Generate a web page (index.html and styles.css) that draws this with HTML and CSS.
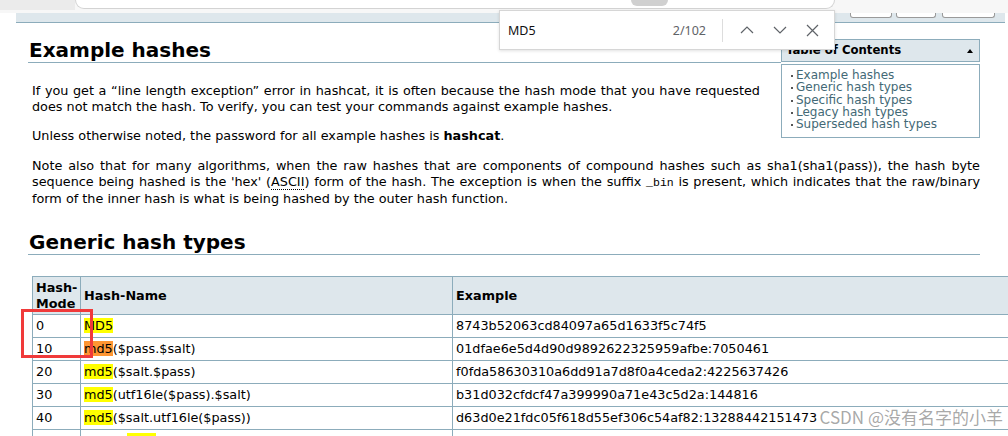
FILE: index.html
```html
<!DOCTYPE html>
<html>
<head>
<meta charset="utf-8">
<title>example_hashes [hashcat wiki]</title>
<link rel="stylesheet" href="styles.css">
</head>
<body>
<div class="chrome">
  <div class="tabarea"></div>
  <div class="addressbar"><span class="pill"></span></div>
</div>
<div class="wikibar">
  <span class="wbtn wb1"></span>
  <span class="wbtn wb2"></span>
  <span class="wbtn wb3"></span>
</div>
<div class="page">
  <div class="toc">
    <div class="toc-head"><span class="toc-title">Table of Contents</span><span class="toc-tri"></span></div>
    <ul class="toc-list">
      <li><a class="toc-link">Example hashes</a></li>
      <li><a class="toc-link">Generic hash types</a></li>
      <li><a class="toc-link">Specific hash types</a></li>
      <li><a class="toc-link">Legacy hash types</a></li>
      <li><a class="toc-link">Superseded hash types</a></li>
    </ul>
  </div>
  <h1 class="sec-title first">Example hashes</h1>
  <div class="level">
    <p><span class="ln">If you get a “line length exception” error in hashcat, it is often because the hash mode that you have requested</span> does not match the hash. To verify, you can test your commands against example hashes.</p>
    <p>Unless otherwise noted, the password for all example hashes is <strong>hashcat</strong>.</p>
    <p class="last"><span class="ln">Note also that for many algorithms, when the raw hashes that are components of compound hashes such as sha1(sha1(pass)), the hash byte</span><span class="ln">sequence being hashed is the 'hex' (<abbr title="American Standard Code for Information Interchange">ASCII</abbr>) form of the hash. The exception is when the suffix <code>_bin</code> is present, which indicates that the raw/binary</span> form of the inner hash is what is being hashed by the outer hash function.</p>
  </div>
  <h2 class="sec-title second">Generic hash types</h2>
  <div class="level">
    <table class="hashes">
      <colgroup><col class="c1"><col class="c2"><col class="c3"></colgroup>
      <thead>
        <tr><th>Hash-Mode</th><th>Hash-Name</th><th>Example</th></tr>
      </thead>
      <tbody>
        <tr><td>0</td><td><mark class="hl">MD5</mark></td><td>8743b52063cd84097a65d1633f5c74f5</td></tr>
        <tr><td>10</td><td><mark class="hl cur">md5</mark>($pass.$salt)</td><td>01dfae6e5d4d90d9892622325959afbe:7050461</td></tr>
        <tr><td>20</td><td><mark class="hl">md5</mark>($salt.$pass)</td><td>f0fda58630310a6dd91a7d8f0a4ceda2:4225637426</td></tr>
        <tr><td>30</td><td><mark class="hl">md5</mark>(utf16le($pass).$salt)</td><td>b31d032cfdcf47a399990a71e43c5d2a:144816</td></tr>
        <tr><td>40</td><td><mark class="hl">md5</mark>($salt.utf16le($pass))</td><td>d63d0e21fdc05f618d55ef306c54af82:13288442151473</td></tr>
        <tr><td>50</td><td>HMAC-<mark class="hl">MD5</mark> (key = $pass)</td><td>fc741db0a2968c39d9c2a5cc75b05370:1234</td></tr>
      </tbody>
    </table>
  </div>
</div>

<div class="findbar">
  <span class="fb-query">MD5</span>
  <span class="fb-count">2/102</span>
  <span class="fb-sep"></span>
  <span class="fb-btn"><svg width="14" height="8" viewBox="0 0 14 8"><polyline points="1,7 7,1 13,7" fill="none" stroke="#5f6368" stroke-width="1.2"/></svg></span>
  <span class="fb-btn"><svg width="14" height="8" viewBox="0 0 14 8"><polyline points="1,1 7,7 13,1" fill="none" stroke="#5f6368" stroke-width="1.2"/></svg></span>
  <span class="fb-btn"><svg width="13" height="13" viewBox="0 0 13 13"><path d="M1 1 L12 12 M12 1 L1 12" fill="none" stroke="#5f6368" stroke-width="1.2"/></svg></span>
</div>
<div class="annot"></div>
<div class="watermark">CSDN @没有名字的小羊</div>
</body>
</html>
```
FILE: styles.css
```css
html, body {
  margin: 0;
  padding: 0;
  overflow: hidden;
  background: #fff;
}
body {
  width: 1008px;
  height: 436px;
  position: relative;
  font-family: "DejaVu Sans", Verdana, sans-serif;
  font-size: 12.8px;
  color: #000;
}

/* browser chrome strip */
.chrome {
  height: 13px;
  background: #f7f7f7;
  display: flex;
  align-items: flex-start;
}
.tabarea {
  width: 75px;
  height: 10px;
  background: #ebebeb;
}
.addressbar {
  position: relative;
  width: 760px;
  height: 9px;
  box-sizing: border-box;
  background: #fff;
  border: 1px solid #d3d3d3;
  border-top: none;
  border-radius: 0 0 14px 14px;
}
.pill {
  position: absolute;
  left: 555px;
  top: 0;
  width: 37px;
  height: 6px;
  background: #d0d0d0;
  border-radius: 0 0 12px 12px;
}

/* dokuwiki top bar */
.wikibar {
  margin-left: 16px;
  width: 979px;
  height: 9px;
  background: #dee7ec;
  border-bottom: 1px solid #8cacbb;
  display: flex;
  justify-content: flex-end;
  align-items: flex-start;
  padding-right: 10px;
}
.wbtn {
  height: 4px;
  background: #fff;
  border: 1px solid #9a9a9a;
  border-top: none;
  border-radius: 0 0 3px 3px;
}
.wb1 { width: 40px; margin-right: 4px; }
.wb2 { width: 38px; margin-right: 6px; }
.wb3 { width: 51px; }

/* page */
.page {
  padding: 15px 28px 0 28px;
  width: 952px;
}
.sec-title {
  margin: 0;
  padding-left: 1px;
  font-size: 20px;
  font-weight: bold;
  border-bottom: 1px solid #8cacbb;
}
.sec-title.first {
  line-height: 24px;
  margin-bottom: 20px;
}
.sec-title.second {
  line-height: 23px;
  margin-top: 25px;
}
.level {
  margin-left: 4px;
}
.level p {
  margin: 0 0 14px 0;
  line-height: 15.7px;
  text-align: justify;
}
.level p.last {
  margin-bottom: 0;
}
.ln {
  display: block;
  text-align: justify;
  text-align-last: justify;
}
abbr {
  text-decoration: none;
  border-bottom: 1px dotted #000;
}
code {
  font-family: "Liberation Mono", "DejaVu Sans Mono", monospace;
  font-size: 11.5px;
}

/* TOC */
.toc {
  float: right;
  width: 199px;
  margin: 1px 0 0 21px;
  background: #fff;
  position: relative;
  z-index: 1;
}
.toc-head {
  height: 21px;
  line-height: 21px;
  background: #dee7ec;
  border: 1px solid #8cacbb;
  padding: 0 6px 0 4px;
  display: flex;
  justify-content: space-between;
  align-items: center;
  font-weight: bold;
  font-size: 11.7px;
}
.toc-tri {
  width: 0;
  height: 0;
  border-left: 3.5px solid transparent;
  border-right: 3.5px solid transparent;
  border-bottom: 4px solid #000;
}
.toc-list {
  list-style: none;
  margin: 2px 0 0 0;
  padding: 4px 0 7px 0;
  border: 1px solid #8cacbb;
  font-size: 12px;
  line-height: 12.3px;
}
.toc-list li {
  position: relative;
  padding-left: 14px;
}
.toc-list li::before {
  content: "";
  position: absolute;
  left: 9px;
  top: 6px;
  width: 2px;
  height: 2px;
  background: #555;
}
.toc-link {
  color: #436976;
  text-decoration: none;
}

/* table */
.hashes {
  margin-top: 21px;
  border-collapse: collapse;
  table-layout: fixed;
  width: 1180px;
}
.c1 { width: 48px; }
.c2 { width: 372px; }
.c3 { width: 760px; }
.hashes th,
.hashes td {
  border: 1px solid #8cacbb;
  padding: 3px 3px;
  text-align: left;
  vertical-align: middle;
  line-height: 16px;
  font-size: 12.8px;
}
.hashes th {
  background: #dee7ec;
  font-weight: bold;
  line-height: 15.6px;
}
.hl {
  background: #ffff00;
  color: #000;
}
.hl.cur {
  background: #ff9632;
}

/* browser find bar */
.findbar {
  position: absolute;
  left: 499px;
  top: 10px;
  width: 336px;
  height: 40px;
  box-sizing: border-box;
  background: #fff;
  border: 1px solid #d6d6d6;
  box-shadow: 0 1px 3px rgba(0, 0, 0, 0.12);
  display: flex;
  align-items: center;
  padding: 0 5px 0 8px;
  font-family: "Noto Sans", "Open Sans", sans-serif;
  z-index: 5;
}
.fb-query {
  flex: 1;
  font-size: 12.5px;
  color: #111;
}
.fb-count {
  font-size: 12.5px;
  color: #5f6368;
  margin-right: 16px;
}
.fb-sep {
  width: 1px;
  height: 23px;
  background: #dddddd;
  margin-right: 7px;
}
.fb-btn {
  width: 33px;
  height: 24px;
  display: flex;
  align-items: center;
  justify-content: center;
}

/* annotation & watermark */
.annot {
  position: absolute;
  left: 21px;
  top: 309px;
  width: 72px;
  height: 49px;
  box-sizing: border-box;
  border: 3px solid #f03a3a;
  z-index: 4;
}
.watermark {
  position: absolute;
  right: 5px;
  top: 406px;
  font-family: "Noto Sans CJK SC", "Noto Sans", sans-serif;
  font-size: 17px;
  line-height: 22px;
  color: rgba(130, 130, 130, 0.7);
  z-index: 4;
}
```
